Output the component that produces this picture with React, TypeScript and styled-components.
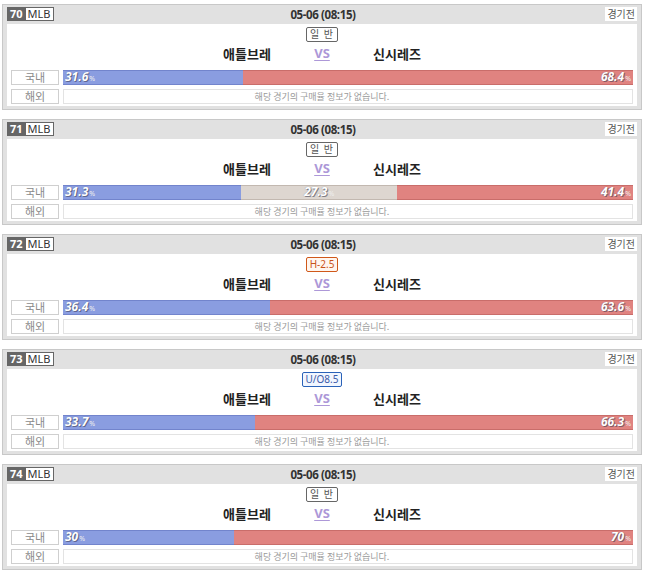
import React from "react";
import styled, { createGlobalStyle } from "styled-components";

const Global = createGlobalStyle`
  html, body { margin: 0; padding: 0; background: #fff; }
  body { font-family: "Noto Sans CJK KR", "Noto Sans", sans-serif; }
`;

const Page = styled.div`
  padding: 4px 0 0 2px;
  width: 640px;
`;

const Card = styled.div`
  width: 640px;
  box-sizing: border-box;
  border: 1px solid #c8c8c8;
  background: #e1e1e1;
  padding: 0 4px 3px 4px;
  margin-bottom: 9px;
`;

const Header = styled.div`
  height: 19px;
  display: grid;
  grid-template-columns: 1fr auto 1fr;
  align-items: center;
  padding-bottom: 1px;
  box-sizing: border-box;
`;

const GameTag = styled.div`
  display: flex;
  height: 14px;
  border: 1px solid #666;
  box-sizing: border-box;
  justify-self: start;
  font-family: "Noto Sans", sans-serif;
  font-size: 11px;
  line-height: 12px;
`;

const GameNo = styled.span`
  background: #666;
  color: #fff;
  font-weight: bold;
  padding: 0 3px 0 2px;
`;

const League = styled.span`
  background: #fff;
  color: #333;
  padding: 0 2px 0 2px;
`;

const DateText = styled.div`
  font-family: "Noto Sans", sans-serif;
  font-size: 11.5px;
  letter-spacing: -0.4px;
  font-weight: bold;
  color: #333;
  padding-left: 2px;
`;

const Status = styled.div`
  justify-self: end;
  background: #fff;
  color: #555;
  font-size: 10px;
  height: 14px;
  line-height: 14px;
  padding: 0 2px;
`;

const Body = styled.div`
  background: #fff;
  padding: 3px 4px 2px 4px;
  display: flex;
  flex-direction: column;
`;

const TypeRow = styled.div`
  display: flex;
  justify-content: center;
  height: 15px;
`;

const TypeBadge = styled.span<{ $kind: "normal" | "handi" | "uo" }>`
  display: inline-block;
  box-sizing: border-box;
  height: 15px;
  line-height: 13px;
  font-size: 10px;
  padding: 0 3px;
  border-radius: 2px;
  font-family: "Noto Sans", "Noto Sans CJK KR", sans-serif;
  border: 1px solid
    ${(p) => (p.$kind === "handi" ? "#d0581a" : p.$kind === "uo" ? "#2a62b8" : "#666")};
  color: ${(p) => (p.$kind === "handi" ? "#c9531a" : p.$kind === "uo" ? "#3b5aa8" : "#555")};
  background: ${(p) => (p.$kind === "handi" ? "#fff6ef" : p.$kind === "uo" ? "#f1f6ff" : "#fff")};
  letter-spacing: ${(p) => (p.$kind === "normal" ? "1px" : "0")};
`;

const TeamRow = styled.div`
  display: flex;
  justify-content: center;
  align-items: center;
  height: 22px;
  margin-bottom: 6px;
`;

const Team = styled.div`
  width: 90px;
  text-align: center;
  font-size: 13px;
  font-weight: bold;
  color: #222;
`;

const Vs = styled.div`
  width: 60px;
  text-align: center;
  font-size: 13px;
  font-weight: bold;
  color: #ad98d8;
  text-decoration: underline;
  text-underline-offset: 2px;
  font-family: "Noto Sans", sans-serif;
`;

const Row = styled.div<{ $gap?: boolean }>`
  display: flex;
  gap: 4px;
  height: 15px;
  margin-top: ${(p) => (p.$gap ? "4px" : "0")};
`;

const Label = styled.div`
  width: 48px;
  box-sizing: border-box;
  border: 1px solid #cfcfcf;
  color: #8a8a8a;
  font-size: 11px;
  line-height: 13px;
  text-align: center;
`;

const Bar = styled.div`
  width: 570px;
  display: flex;
  height: 15px;
`;

const segColors = {
  home: { bg: "#8a9de0", bd: "#7284cc" },
  draw: { bg: "#ddd6d0", bd: "#c2b8b0" },
  away: { bg: "#e08380", bd: "#c96d6a" },
};

const Seg = styled.div<{ $side: "home" | "draw" | "away" }>`
  box-sizing: border-box;
  height: 15px;
  background: ${(p) => segColors[p.$side].bg};
  border-top: 1px solid ${(p) => segColors[p.$side].bd};
  border-bottom: 1px solid ${(p) => segColors[p.$side].bd};
  display: flex;
  align-items: center;
  justify-content: ${(p) => (p.$side === "home" ? "flex-start" : p.$side === "away" ? "flex-end" : "center")};
  padding: 0 2px;
  white-space: nowrap;
`;

const Pct = styled.span`
  color: #fff;
  font-family: "Noto Sans", sans-serif;
  font-size: 12px;
  font-weight: bold;
  font-style: italic;
  line-height: 13px;
  text-shadow: 1px 1px 0 rgba(60, 60, 80, 0.55), 0 0 1px rgba(60, 60, 80, 0.5);
`;

const PctSign = styled.span`
  font-size: 7px;
  color: #eee;
  font-style: normal;
  font-weight: normal;
  margin-left: 1px;
  text-shadow: none;
`;

const Empty = styled.div`
  width: 570px;
  box-sizing: border-box;
  border: 1px solid #e3e3e3;
  color: #9a9a9a;
  font-size: 9px;
  line-height: 13px;
  text-align: center;
  padding-right: 52px;
`;

type Game = {
  no: number;
  type: "normal" | "handi" | "uo";
  typeText: string;
  home: number;
  draw?: number;
  away: number;
};

const games: Game[] = [
  { no: 70, type: "normal", typeText: "일 반", home: 31.6, away: 68.4 },
  { no: 71, type: "normal", typeText: "일 반", home: 31.3, draw: 27.3, away: 41.4 },
  { no: 72, type: "handi", typeText: "H-2.5", home: 36.4, away: 63.6 },
  { no: 73, type: "uo", typeText: "U/O8.5", home: 33.7, away: 66.3 },
  { no: 74, type: "normal", typeText: "일 반", home: 30, away: 70 },
];

const Value = ({ v }: { v: number }) => (
  <Pct>
    {v}
    <PctSign>%</PctSign>
  </Pct>
);

export default function App() {
  return (
    <Page>
      <Global />
      {games.map((g) => (
        <Card key={g.no}>
          <Header>
            <GameTag>
              <GameNo>{g.no}</GameNo>
              <League>MLB</League>
            </GameTag>
            <DateText>05-06 (08:15)</DateText>
            <Status>경기전</Status>
          </Header>
          <Body>
            <TypeRow>
              <TypeBadge $kind={g.type}>{g.typeText}</TypeBadge>
            </TypeRow>
            <TeamRow>
              <Team>애틀브레</Team>
              <Vs>VS</Vs>
              <Team>신시레즈</Team>
            </TeamRow>
            <Row>
              <Label>국내</Label>
              <Bar>
                <Seg $side="home" style={{ width: `${g.home}%` }}>
                  <Value v={g.home} />
                </Seg>
                {g.draw !== undefined && (
                  <Seg $side="draw" style={{ width: `${g.draw}%` }}>
                    <Value v={g.draw} />
                  </Seg>
                )}
                <Seg $side="away" style={{ flex: 1 }}>
                  <Value v={g.away} />
                </Seg>
              </Bar>
            </Row>
            <Row $gap>
              <Label>해외</Label>
              <Empty>해당 경기의 구매율 정보가 없습니다.</Empty>
            </Row>
          </Body>
        </Card>
      ))}
    </Page>
  );
}
